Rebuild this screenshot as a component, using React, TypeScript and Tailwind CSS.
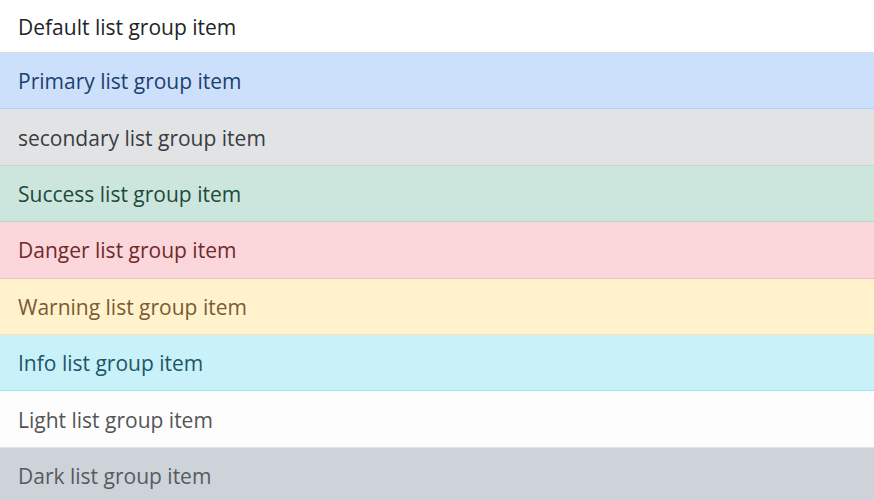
const ITEMS = [
  { label: "Default list group item", cls: "bg-white text-[#212529] border-[#dcdcdc] h-[53px]" },
  { label: "Primary list group item", cls: "bg-[#cce0fb] text-[#1d3f6e] border-[#b0cffa] h-[56.4px]" },
  { label: "secondary list group item", cls: "bg-[#e2e3e5] text-[#383d41] border-[#cfd1d4] h-[56.4px]" },
  { label: "Success list group item", cls: "bg-[#cce6dd] text-[#1c4a3c] border-[#b5d8c9] h-[56.4px]" },
  { label: "Danger list group item", cls: "bg-[#fbd6da] text-[#6f2a2c] border-[#f5bec4] h-[56.4px]" },
  { label: "Warning list group item", cls: "bg-[#fff2cd] text-[#7b5a32] border-[#fde4a3] h-[56.4px]" },
  { label: "Info list group item", cls: "bg-[#c8f1fa] text-[#1f5568] border-[#a6e6f3] h-[56.4px]" },
  { label: "Light list group item", cls: "bg-[#fdfdfd] text-[#555555] border-[#e4e4e4] h-[56.4px]" },
  { label: "Dark list group item", cls: "bg-[#cdd3d9] text-[#565b61] border-[#bfc5cb] h-[56.4px]" },
];

export default function App() {
  return (
    <main className="w-[874px] h-[500px] overflow-hidden bg-white font-['Open_Sans',sans-serif]">
      <ul className="flex flex-col">
        {ITEMS.map((item) => (
          <li
            key={item.label}
            className={`flex items-center px-[18px] pt-[1px] border-b text-[21px] leading-[30px] shrink-0 ${item.cls}`}
          >
            {item.label}
          </li>
        ))}
      </ul>
    </main>
  );
}
